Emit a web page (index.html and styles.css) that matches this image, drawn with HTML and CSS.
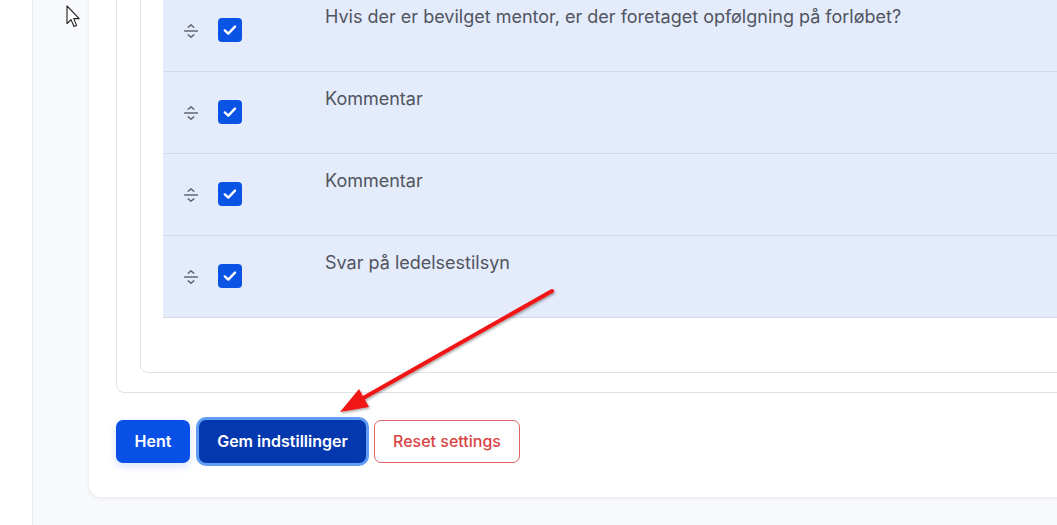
FILE: index.html
```html
<!DOCTYPE html>
<html lang="da">
<head>
<meta charset="utf-8">
<title>Indstillinger</title>
<link rel="stylesheet" href="styles.css">
</head>
<body>
<div class="app">
  <div class="gutter"></div>
  <main class="main">
    <section class="card">
      <div class="outer">
        <div class="inner">
          <div class="rows">
            <div class="row">
              <div class="handle">
                <svg class="drag" width="16" height="16" viewBox="0 0 16 16"><path d="M5.2 4.3 8 1.9 10.8 4.3M1.6 8.1h12.8M5.2 11.9 8 14.3 10.8 11.9" fill="none" stroke="#626873" stroke-width="1.5" stroke-linecap="round" stroke-linejoin="round"/></svg>
                <span class="check"><svg width="16" height="16" viewBox="0 0 16 16"><path d="M2.8 8.4 6.3 11.6 13 4.6" fill="none" stroke="#fff" stroke-width="2.4" stroke-linecap="round" stroke-linejoin="round"/></svg></span>
              </div>
              <div class="label">Hvis der er bevilget mentor, er der foretaget opfølgning på forløbet?</div>
            </div>
            <div class="row">
              <div class="handle">
                <svg class="drag" width="16" height="16" viewBox="0 0 16 16"><path d="M5.2 4.3 8 1.9 10.8 4.3M1.6 8.1h12.8M5.2 11.9 8 14.3 10.8 11.9" fill="none" stroke="#626873" stroke-width="1.5" stroke-linecap="round" stroke-linejoin="round"/></svg>
                <span class="check"><svg width="16" height="16" viewBox="0 0 16 16"><path d="M2.8 8.4 6.3 11.6 13 4.6" fill="none" stroke="#fff" stroke-width="2.4" stroke-linecap="round" stroke-linejoin="round"/></svg></span>
              </div>
              <div class="label">Kommentar</div>
            </div>
            <div class="row">
              <div class="handle">
                <svg class="drag" width="16" height="16" viewBox="0 0 16 16"><path d="M5.2 4.3 8 1.9 10.8 4.3M1.6 8.1h12.8M5.2 11.9 8 14.3 10.8 11.9" fill="none" stroke="#626873" stroke-width="1.5" stroke-linecap="round" stroke-linejoin="round"/></svg>
                <span class="check"><svg width="16" height="16" viewBox="0 0 16 16"><path d="M2.8 8.4 6.3 11.6 13 4.6" fill="none" stroke="#fff" stroke-width="2.4" stroke-linecap="round" stroke-linejoin="round"/></svg></span>
              </div>
              <div class="label">Kommentar</div>
            </div>
            <div class="row">
              <div class="handle">
                <svg class="drag" width="16" height="16" viewBox="0 0 16 16"><path d="M5.2 4.3 8 1.9 10.8 4.3M1.6 8.1h12.8M5.2 11.9 8 14.3 10.8 11.9" fill="none" stroke="#626873" stroke-width="1.5" stroke-linecap="round" stroke-linejoin="round"/></svg>
                <span class="check"><svg width="16" height="16" viewBox="0 0 16 16"><path d="M2.8 8.4 6.3 11.6 13 4.6" fill="none" stroke="#fff" stroke-width="2.4" stroke-linecap="round" stroke-linejoin="round"/></svg></span>
              </div>
              <div class="label">Svar på ledelsestilsyn</div>
            </div>
          </div>
        </div>
      </div>
      <div class="actions">
        <button class="btn btn-primary">Hent</button>
        <button class="btn btn-dark">Gem indstillinger</button>
        <button class="btn btn-outline">Reset settings</button>
      </div>
    </section>
  </main>
</div>

<svg class="cursor" width="16" height="24" viewBox="0 0 16 24"><path d="M1 1V18.5L5 14.6 8 21.5 10.6 20.4 7.7 13.6H13.2Z" fill="#fff" stroke="#222" stroke-width="1.1" stroke-linejoin="round"/></svg>

<svg class="arrow" width="1057" height="525" viewBox="0 0 1057 525">
  <defs>
    <filter id="sh" x="-10%" y="-10%" width="120%" height="120%">
      <feDropShadow dx="1" dy="1.5" stdDeviation="1.2" flood-color="#000" flood-opacity="0.35"/>
    </filter>
  </defs>
  <g filter="url(#sh)">
    <line x1="552" y1="291" x2="358" y2="401" stroke="#f01414" stroke-width="4" stroke-linecap="round"/>
    <polygon points="340,412 359,389 369,407" fill="#f01414"/>
  </g>
</svg>
</body>
</html>
```

FILE: styles.css
```css
* { box-sizing: border-box; }
html, body { margin: 0; padding: 0; }
body {
  width: 1057px;
  height: 525px;
  overflow: hidden;
  background: #fff;
  font-family: Inter, "Noto Sans", "Liberation Sans", sans-serif;
  position: relative;
}
.app {
  display: flex;
  height: 525px;
}
.gutter {
  width: 32px;
  flex: none;
  background: #fff;
}
.main {
  flex: 1;
  min-width: 0;
  background: #f8f9fc;
  border-left: 1px solid #e6e8ee;
  padding-left: 56px;
}
.card {
  margin-top: -56px;
  margin-right: -40px;
  background: #fff;
  border-radius: 12px;
  padding: 10px 0 34px 27px;
  box-shadow: 0 1px 4px rgba(20, 30, 60, 0.09);
}
.outer {
  border: 1px solid #e1e1e3;
  border-radius: 8px;
  padding: 17px 0 19px 23px;
}
.inner {
  border: 1px solid #e1e1e3;
  border-radius: 8px;
  padding: 17px 0 54px 22px;
}
.rows {
  background: #e4ebfb;
}
.row {
  display: flex;
  height: 82px;
  border-bottom: 1px solid #d2d9e8;
}
.handle {
  display: flex;
  align-items: center;
  gap: 19px;
  padding: 28px 0 0 20px;
  height: 52px;
  width: 162px;
  flex: none;
}
.drag { display: block; margin-top: 2px; }
.check {
  width: 24px;
  height: 24px;
  border-radius: 4px;
  background: #0a53e4;
  display: flex;
  align-items: center;
  justify-content: center;
}
.check svg { display: block; }
.label {
  padding-top: 14px;
  font-size: 18px;
  line-height: 26px;
  color: #50555f;
}
.actions {
  display: flex;
  gap: 8px;
  margin-top: 27px;
}
.btn {
  height: 43px;
  border-radius: 7px;
  font-family: Inter, "Noto Sans", sans-serif;
  font-size: 16px;
  font-weight: 600;
  padding: 0 0 2px;
  border: 1px solid transparent;
  cursor: pointer;
}
.btn-primary {
  width: 74px;
  background: #0950e6;
  color: #fff;
  box-shadow: 0 3px 8px rgba(9, 80, 230, 0.18);
}
.btn-dark {
  margin-left: 1px;
  width: 167px;
  background: #0438ae;
  color: #fff;
  box-shadow: 0 0 0 3px #5f9ef2;
}
.btn-outline {
  width: 146px;
  background: #fff;
  color: #d84444;
  border-color: #e06464;
  font-weight: 500;
}
.cursor {
  position: absolute;
  left: 66px;
  top: 5px;
}
.arrow {
  position: absolute;
  left: 0;
  top: 0;
  pointer-events: none;
}
```
